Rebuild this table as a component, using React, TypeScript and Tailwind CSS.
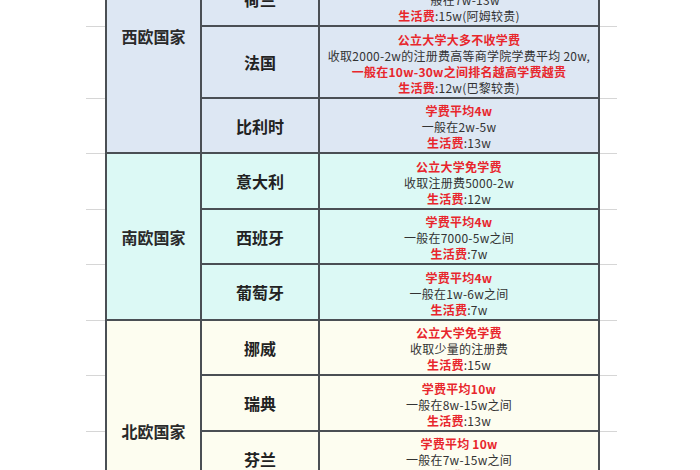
import React from "react";

type Seg = { t: string; red?: boolean };
type Row = { country: string; h: string; lines: Seg[][] };
type Group = { name: string; bg: string; rows: Row[] };

const R = (t: string): Seg[] => [{ t, red: true }];
const N = (t: string): Seg[] => [{ t }];
const L = (v: string): Seg[] => [{ t: "生活费", red: true }, { t: ":" + v }];

const groups: Group[] = [
  {
    name: "西欧国家",
    bg: "bg-[#dde7f3]",
    rows: [
      { country: "", h: "h-[52px]", lines: [] },
      { country: "荷兰", h: "h-[55px]", lines: [R("学费平均8w"), N("一般在7w-13w"), L("15w(阿姆较贵)")] },
      {
        country: "法国",
        h: "h-[72px]",
        lines: [
          R("公立大学大多不收学费"),
          N("收取2000-2w的注册费高等商学院学费平均 20w,"),
          R("一般在10w-30w之间排名越高学费越贵"),
          L("12w(巴黎较贵)"),
        ],
      },
      { country: "比利时", h: "h-[55px]", lines: [R("学费平均4w"), N("一般在2w-5w"), L("13w")] },
    ],
  },
  {
    name: "南欧国家",
    bg: "bg-[#dcf9f5]",
    rows: [
      { country: "意大利", h: "h-[56px]", lines: [R("公立大学免学费"), N("收取注册费5000-2w"), L("12w")] },
      { country: "西班牙", h: "h-[55px]", lines: [R("学费平均4w"), N("一般在7000-5w之间"), L("7w")] },
      { country: "葡萄牙", h: "h-[56px]", lines: [R("学费平均4w"), N("一般在1w-6w之间"), L("7w")] },
    ],
  },
  {
    name: "北欧国家",
    bg: "bg-[#fdfdf0]",
    rows: [
      { country: "挪威", h: "h-[55px]", lines: [R("公立大学免学费"), N("收取少量的注册费"), L("15w")] },
      { country: "瑞典", h: "h-[56px]", lines: [R("学费平均10w"), N("一般在8w-15w之间"), L("13w")] },
      { country: "芬兰", h: "h-[55px]", lines: [R("学费平均 10w"), N("一般在7w-15w之间"), L("13w")] },
      { country: "丹麦", h: "h-[56px]", lines: [R("学费平均 10w"), N("一般在6w-12w之间"), L("14w")] },
    ],
  },
];

function Ticks({ rows }: { rows: Row[] }) {
  return (
    <div className="flex flex-col">
      {rows.map((r, i) => (
        <div key={i} className={`${r.h} border-b border-[#d6d6d6]`} />
      ))}
    </div>
  );
}

export default function App() {
  return (
    <div className="w-[700px] h-[470px] overflow-hidden bg-white font-['Noto_Sans_CJK_SC',sans-serif]">
      <div className="-mt-[80px] pl-[86px] flex flex-col">
        {groups.map((g) => (
          <div key={g.name} className="flex">
            <div className="w-[19px]">
              <Ticks rows={g.rows} />
            </div>
            <div
              className={`w-[97px] ${g.bg} border-l-2 border-r-2 border-b-2 border-[#4a4f54] flex items-center justify-center text-[16px] font-bold text-[#2a2a2a]`}
            >
              {g.name}
            </div>
            <div className="flex flex-col w-[398px]">
              {g.rows.map((r, i) => (
                <div key={i} className={`flex ${r.h} ${g.bg}`}>
                  <div className="w-[118px] border-r-2 border-b-2 border-[#4a4f54] flex items-center justify-center text-[16px] font-bold text-[#222]">
                    {r.country}
                  </div>
                  <div className="w-[280px] border-r-2 border-b-2 border-[#4a4f54] flex flex-col items-center justify-center pt-[3px] text-[12px] tracking-[0.25px] leading-[16px] text-[#333] whitespace-nowrap">
                    {r.lines.map((line, j) => (
                      <div key={j}>
                        {line.map((s, k) => (
                          <span key={k} className={s.red ? "text-[#e8262c] font-bold" : ""}>
                            {s.t}
                          </span>
                        ))}
                      </div>
                    ))}
                  </div>
                </div>
              ))}
            </div>
            <div className="w-[17px]">
              <Ticks rows={g.rows} />
            </div>
          </div>
        ))}
      </div>
    </div>
  );
}
